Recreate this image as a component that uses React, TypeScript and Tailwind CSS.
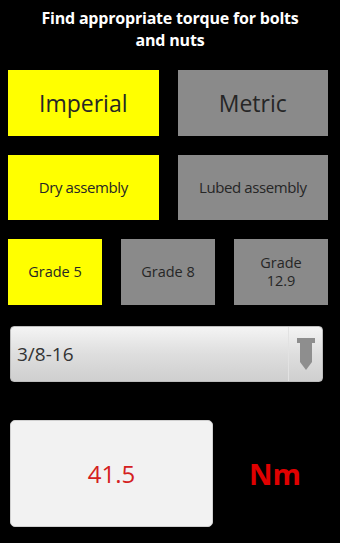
import React from 'react';

const font = { fontFamily: '"Open Sans", "DejaVu Sans", sans-serif' };

function Btn({ label, on, className = '' }: { label: React.ReactNode; on?: boolean; className?: string }) {
  return (
    <div
      className={`flex items-center justify-center text-center leading-tight text-[#262626] ${
        on ? 'bg-[#ffff00]' : 'bg-[#8a8a8a]'
      } ${className}`}
    >
      {label}
    </div>
  );
}

export default function App() {
  return (
    <div className="w-[340px] h-[543px] bg-black overflow-hidden" style={font}>
      <div className="pt-[7px] px-2 text-center text-white font-bold text-[16px] leading-[22px] tracking-[-0.2px]">
        Find appropriate torque for bolts
        <br />
        and nuts
      </div>

      <div className="pl-2 pr-3 mt-[19px] flex flex-col gap-[19px]">
        <div className="flex gap-[19px] h-[66px]">
          <Btn on label="Imperial" className="flex-1 text-[23px]" />
          <Btn label="Metric" className="flex-1 text-[23px]" />
        </div>
        <div className="flex gap-[19px] h-[65px]">
          <Btn on label="Dry assembly" className="flex-1 text-[15px] tracking-[-0.4px]" />
          <Btn label="Lubed assembly" className="flex-1 text-[15px] tracking-[-0.4px]" />
        </div>
        <div className="flex gap-[19px] h-[66px]">
          <Btn on label="Grade 5" className="flex-1 text-[14.5px]" />
          <Btn label="Grade 8" className="flex-1 text-[14.5px]" />
          <Btn
            label={
              <span>
                Grade
                <br />
                12.9
              </span>
            }
            className="flex-1 text-[14.5px]"
          />
        </div>
      </div>

      <div className="ml-[10px] mr-[17px] mt-[21px] h-[56px] rounded-[4px] bg-gradient-to-b from-[#f4f4f4] via-[#dedede] to-[#cfcfcf] flex items-center border border-[#bdbdbd]">
        <span className="flex-1 pl-[6px] text-[19px] text-[#333]">3/8-16</span>
        <div className="h-full w-[34px] flex items-center justify-center border-l border-[#e2e2e2]">
          <svg width="20" height="32" viewBox="0 0 20 32">
            <path d="M1 0 H19 V5 H16 V24 L10 32 L4 24 V5 H1 Z" fill="#8e8e8e" />
          </svg>
        </div>
      </div>

      <div className="mt-[38px] ml-[10px] flex items-center">
        <div className="w-[203px] h-[107px] rounded-[5px] bg-[#f2f2f2] border border-[#d0d0d0] flex items-center justify-center text-[24px] text-[#d42020]">
          41.5
        </div>
        <div className="ml-[36px] text-[29px] font-bold text-[#e00000]">Nm</div>
      </div>
    </div>
  );
}
